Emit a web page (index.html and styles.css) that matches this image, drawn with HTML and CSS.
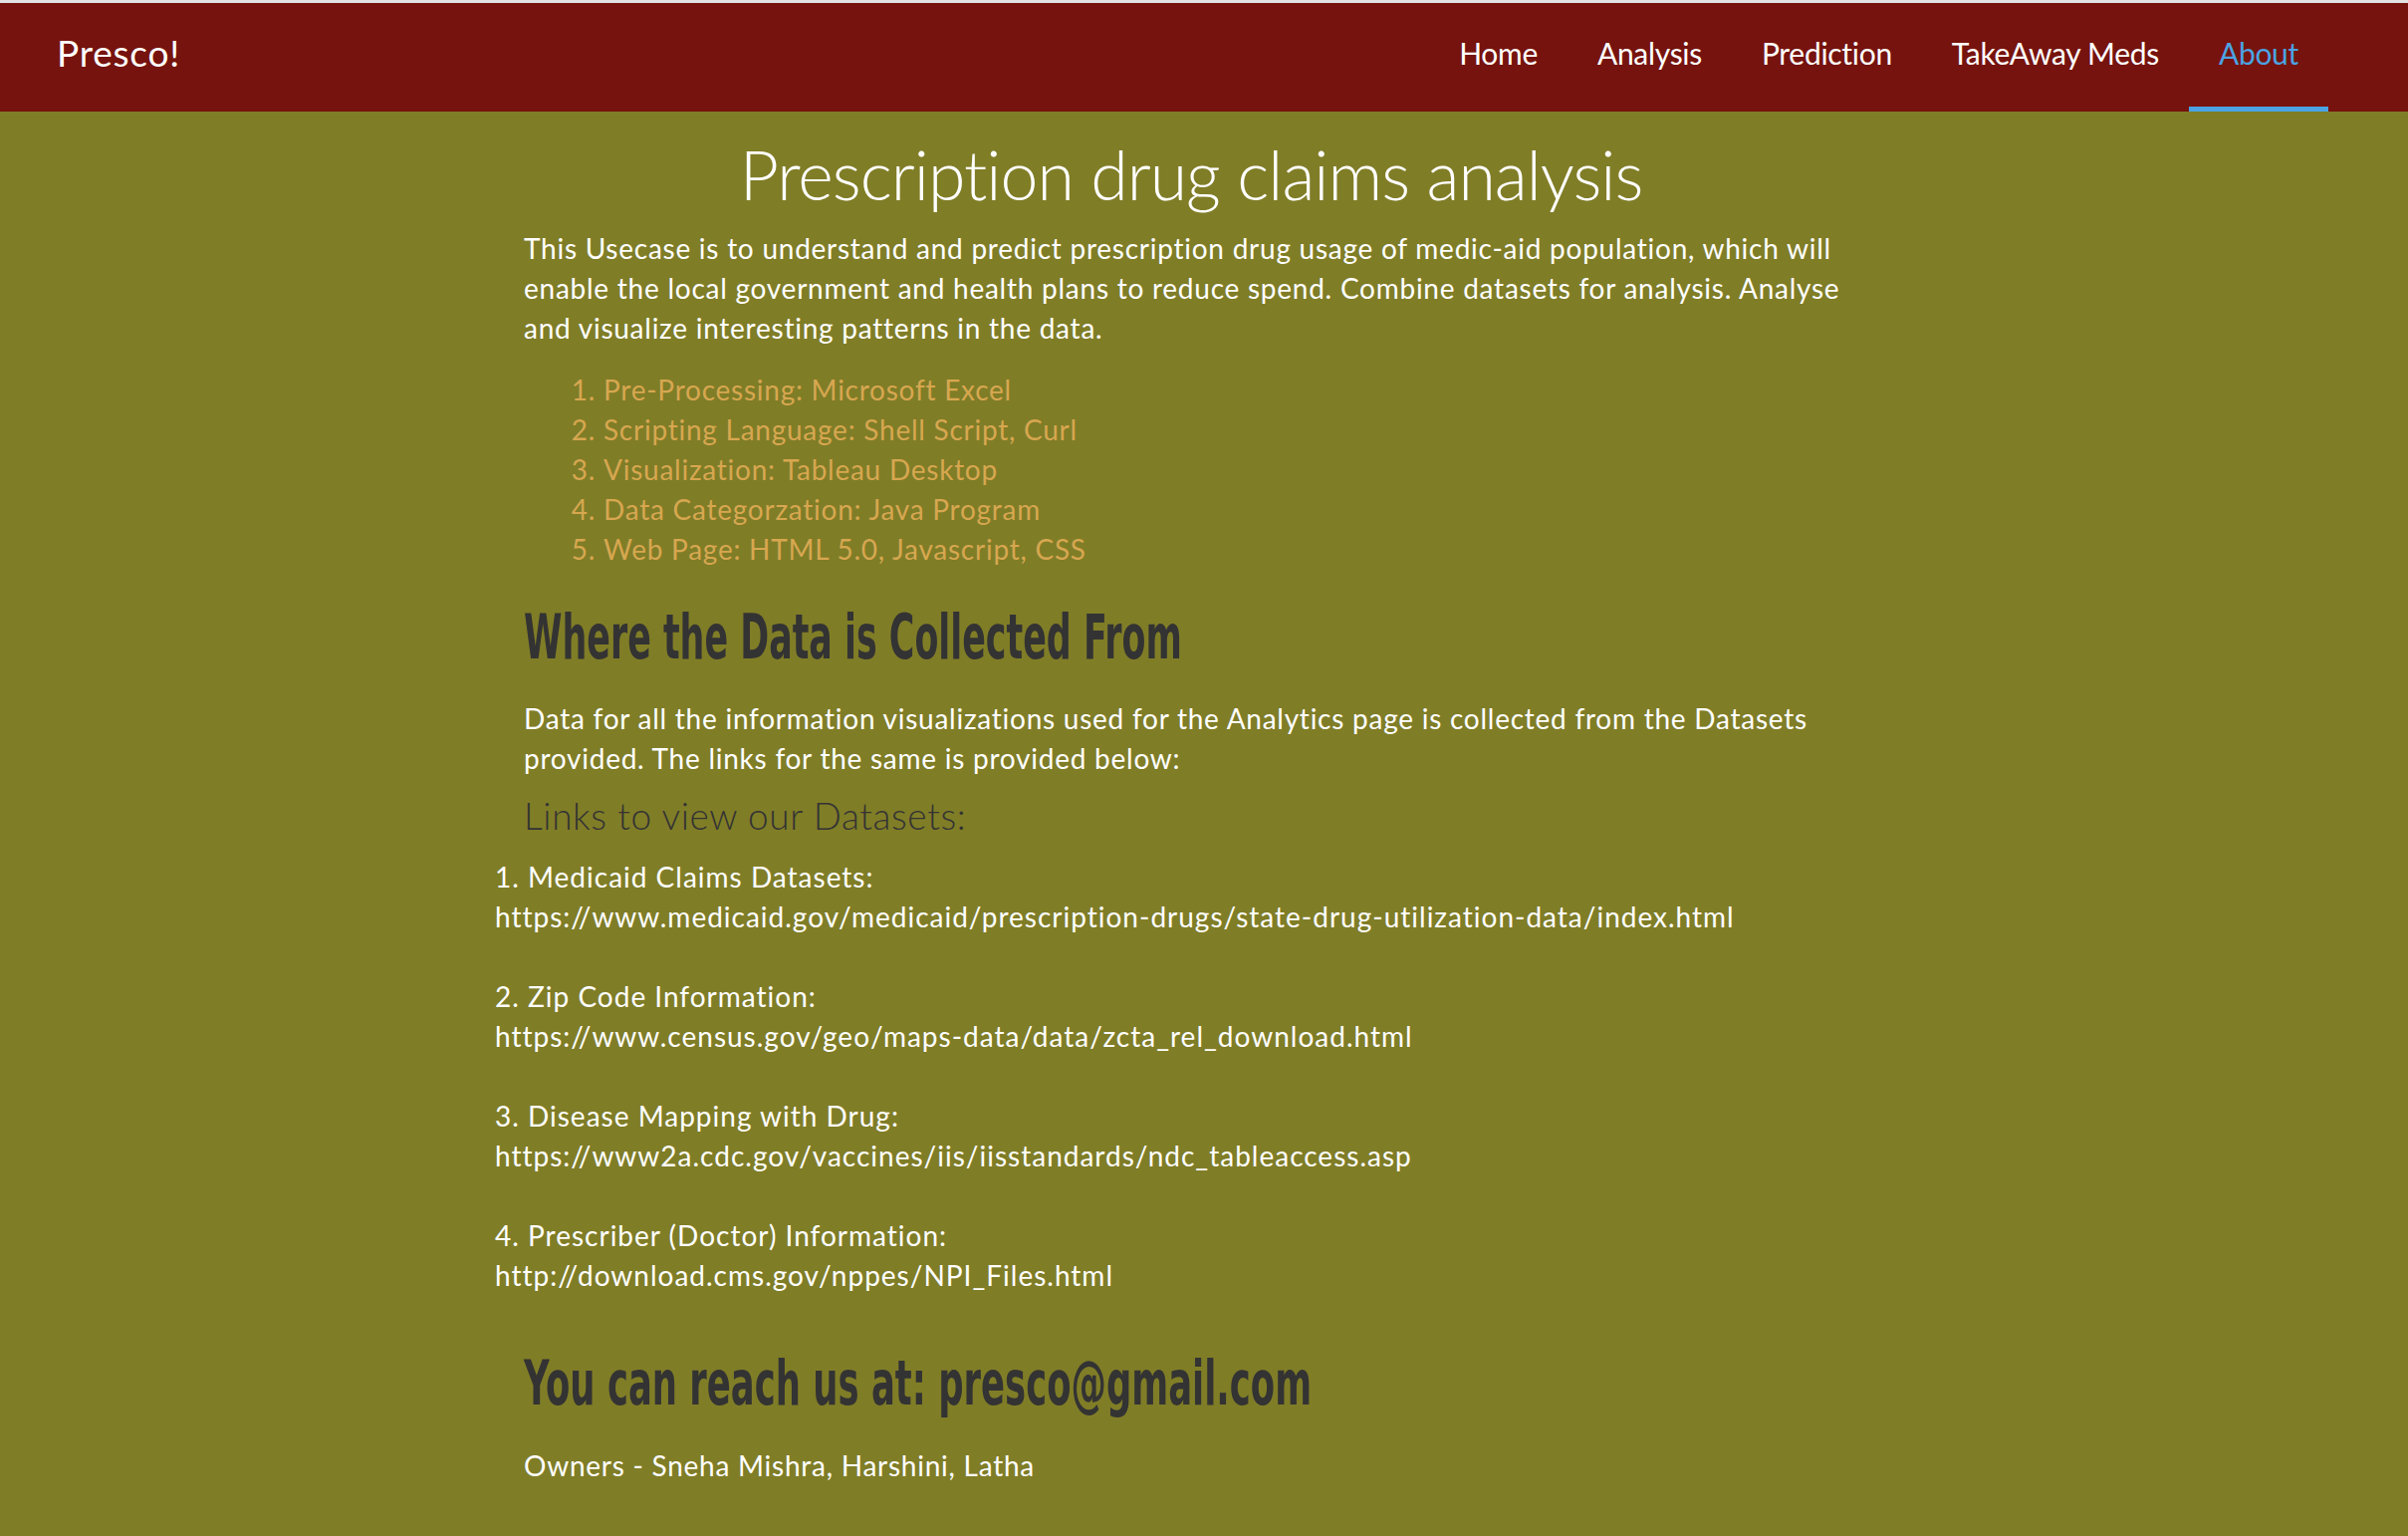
FILE: index.html
```html
<!DOCTYPE html>
<html lang="en">
<head>
<meta charset="utf-8">
<title>Presco! - About</title>
<link rel="stylesheet" href="styles.css">
</head>
<body>
<nav class="navbar">
  <a class="brand" href="#">Presco!</a>
  <ul class="nav-links">
    <li><a href="#">Home</a></li>
    <li><a href="#">Analysis</a></li>
    <li><a href="#">Prediction</a></li>
    <li><a href="#">TakeAway Meds</a></li>
    <li><a class="active" href="#">About</a></li>
  </ul>
</nav>
<main class="main">
  <section class="col">
    <h1 class="title">Prescription drug claims analysis</h1>
    <p class="text">This Usecase is to understand and predict prescription drug usage of medic-aid population, which will<br>enable the local government and health plans to reduce spend. Combine datasets for analysis. Analyse<br>and visualize interesting patterns in the data.</p>
    <ol class="tools">
      <li>Pre-Processing: Microsoft Excel</li>
      <li>Scripting Language: Shell Script, Curl</li>
      <li>Visualization: Tableau Desktop</li>
      <li>Data Categorzation: Java Program</li>
      <li>Web Page: HTML 5.0, Javascript, CSS</li>
    </ol>
    <h2 class="heading"><span>Where the Data is Collected From</span></h2>
    <p class="text">Data for all the information visualizations used for the Analytics page is collected from the Datasets<br>provided. The links for the same is provided below:</p>
    <h3 class="subheading">Links to view our Datasets:</h3>
  </section>
  <div class="links">
    <p>1. Medicaid Claims Datasets:<br>https://www.medicaid.gov/medicaid/prescription-drugs/state-drug-utilization-data/index.html</p>
    <p>2. Zip Code Information:<br>https://www.census.gov/geo/maps-data/data/zcta_rel_download.html</p>
    <p>3. Disease Mapping with Drug:<br>https://www2a.cdc.gov/vaccines/iis/iisstandards/ndc_tableaccess.asp</p>
    <p>4. Prescriber (Doctor) Information:<br>http://download.cms.gov/nppes/NPI_Files.html</p>
  </div>
  <section class="col">
    <h2 class="heading contact"><span>You can reach us at: presco@gmail.com</span></h2>
    <p class="text owners">Owners - Sneha Mishra, Harshini, Latha</p>
  </section>
</main>
</body>
</html>
```
FILE: styles.css
```css
html, body {
  margin: 0;
  padding: 0;
}
body {
  background: #807d27;
  font-family: Lato, "Open Sans", "Liberation Sans", sans-serif;
  color: #ffffff;
  border-top: 3px solid #e2e2e2;
  min-height: 1539px;
}
a {
  text-decoration: none;
}
.navbar {
  height: 109px;
  background: #76130e;
  display: flex;
  align-items: center;
  justify-content: space-between;
}
.brand {
  color: #ffffff;
  font-size: 37px;
  letter-spacing: 0.8px;
  padding-left: 57px;
  padding-bottom: 10px;
}
.nav-links {
  list-style: none;
  margin: 0 80px 0 0;
  padding: 0;
  display: flex;
  height: 100%;
}
.nav-links li {
  display: flex;
}
.nav-links a {
  display: flex;
  align-items: center;
  box-sizing: border-box;
  padding: 0 30px 5px;
  height: 109px;
  font-size: 30px;
  letter-spacing: -0.3px;
  color: #ffffff;
  border-bottom: 5px solid transparent;
}
.nav-links a.active {
  color: #4ba3e3;
  border-bottom-color: #4ba3e3;
}
.main {
  margin-left: 497px;
  width: 1369px;
  padding-bottom: 40px;
}
.col {
  padding-left: 29px;
}
.title {
  margin: 23px 0 15px;
  text-align: center;
  font-size: 68px;
  letter-spacing: -1px;
  line-height: 79px;
  font-weight: 300;
}
.text {
  margin: 0 0 20px;
  font-size: 28px;
  letter-spacing: 0.75px;
  line-height: 40px;
}
.tools {
  margin: 22px 0 20px;
  padding-left: 80px;
  font-size: 28px;
  letter-spacing: 0.75px;
  line-height: 40px;
  color: #d7a750;
}
.heading {
  margin: 29px 0 21px;
  font-family: "Liberation Sans Narrow", "DejaVu Sans Condensed", "Liberation Sans", sans-serif;
  font-weight: 700;
  font-size: 62px;
  line-height: 80px;
  color: #333333;
  white-space: nowrap;
}
.heading span {
  display: inline-block;
  transform: scaleX(0.625);
  transform-origin: left center;
}
.heading.contact span {
  transform: scaleX(0.635);
}
.subheading {
  margin: -4px 0 19px;
  font-size: 37px;
  letter-spacing: 0.6px;
  line-height: 44px;
  font-weight: 300;
  color: #333333;
}
.links p {
  margin: 0 0 40px;
  font-size: 28px;
  letter-spacing: 1px;
  line-height: 40px;
}
.heading.contact {
  margin-top: 49px;
  margin-bottom: 22px;
}
.owners {
  margin-top: 0;
}
```
